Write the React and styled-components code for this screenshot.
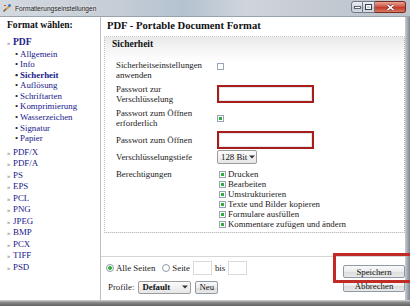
import React from "react";
import styled, { createGlobalStyle } from "styled-components";

const GlobalStyle = createGlobalStyle`
  html, body {
    margin: 0;
    padding: 0;
  }
  body {
    width: 410px;
    height: 306px;
    overflow: hidden;
    background: #fff;
    font-family: "Liberation Serif", "Times New Roman", serif;
  }
`;

const pdfPages = [
  "Allgemein",
  "Info",
  "Sicherheit",
  "Auflösung",
  "Schriftarten",
  "Komprimierung",
  "Wasserzeichen",
  "Signatur",
  "Papier",
];

const formats = ["PDF/X", "PDF/A", "PS", "EPS", "PCL", "PNG", "JPEG", "BMP", "PCX", "TIFF", "PSD"];

const permissions = [
  "Drucken",
  "Bearbeiten",
  "Umstrukturieren",
  "Texte und Bilder kopieren",
  "Formulare ausfüllen",
  "Kommentare zufügen und ändern",
];

const Window = styled.div`
  position: relative;
  width: 410px;
  height: 306px;
  display: flex;
  flex-direction: column;
  overflow: hidden;
  background: #fff;
`;

const TitleBar = styled.div`
  height: 17px;
  flex: none;
  display: flex;
  align-items: center;
  padding-left: 2px;
  background: linear-gradient(
    to right,
    #d3d9df 0%,
    #c4ccd5 30%,
    #b4c2d0 45%,
    #cfd5db 60%,
    #c3c9d0 80%,
    #bcc3cb 100%
  );
  border-bottom: 1px solid #9aa3ad;
  box-sizing: border-box;
`;

const TitleText = styled.span`
  margin-left: 3px;
  font-family: "Liberation Sans", Arial, sans-serif;
  font-size: 6.6px;
  color: #1b1b1b;
  text-shadow: 0 0 3px #fff;
`;

const Caption = styled.div`
  margin-left: auto;
  display: flex;
  align-self: flex-start;
  margin-top: 1px;
  margin-right: 4px;
`;

const CapButton = styled.div`
  width: ${(p) => (p.$wide ? 31 : 12)}px;
  height: 12px;
  display: flex;
  align-items: center;
  justify-content: center;
  border: 1px solid ${(p) => (p.$wide ? "#7b2a20" : "#6f7884")};
  border-left-width: ${(p) => (p.$first ? 1 : 0)}px;
  border-radius: ${(p) => (p.$first ? "3px 0 0 3px" : p.$wide ? "0 3px 3px 0" : "0")};
  background: ${(p) =>
    p.$wide
      ? "linear-gradient(#e8a595, #d0584a 45%, #c23b2b 55%, #d97a60)"
      : "linear-gradient(#eef1f4, #d4dae0 45%, #c2c9d1 55%, #d8dde3)"};
  box-sizing: border-box;
`;

const Main = styled.div`
  flex: 1;
  min-height: 0;
  display: flex;
`;

const Sidebar = styled.nav`
  width: 101px;
  flex: none;
  box-sizing: border-box;
  border-right: 1px solid #bdbdbd;
  padding: 2px 0 0 7px;
  color: #20208a;
`;

const SideHeading = styled.div`
  font-weight: bold;
  font-size: 9.6px;
  line-height: 12px;
  color: #111;
`;

const FormatItem = styled.div`
  display: flex;
  align-items: baseline;
  font-size: ${(p) => (p.$active ? 9.6 : 8.9)}px;
  font-weight: ${(p) => (p.$active ? "bold" : "normal")};
  line-height: 11.5px;
  margin-top: ${(p) => p.$top || 0}px;
`;

const Marker = styled.span`
  width: 6px;
  font-size: 6.5px;
  color: #666;
  font-weight: normal;
`;

const SubItem = styled.div`
  display: flex;
  padding-left: 8px;
  font-size: 8.9px;
  line-height: 10.6px;
  font-weight: ${(p) => (p.$active ? "bold" : "normal")};
`;

const Bullet = styled.span`
  width: 5px;
  color: #222;
`;

const Content = styled.section`
  flex: 1;
  min-width: 0;
  display: flex;
  flex-direction: column;
`;

const PageTitle = styled.h1`
  margin: 0;
  padding: 2px 0 0 6px;
  font-size: 10.6px;
  line-height: 13px;
  font-weight: bold;
  color: #111;
`;

const Fieldset = styled.div`
  margin: 4px 0 0 3px;
  border: 1px dotted #c2c2c2;
  border-right: 1px dotted #b0b0b0;
  background: linear-gradient(#e9e9e9, #f7f7f7 14px, #fff 26px);
  padding-bottom: 3px;
`;

const Legend = styled.div`
  height: 14px;
  padding-left: 7px;
  font-size: 9.5px;
  font-weight: bold;
  line-height: 14px;
  color: #111;
`;

const Form = styled.div`
  padding: 9px 0 0 11px;
  font-size: 8.8px;
  color: #222;
`;

const Row = styled.div`
  display: flex;
  align-items: ${(p) => (p.$top ? "flex-start" : "center")};
  margin-top: ${(p) => p.$gap || 0}px;
  min-height: ${(p) => p.$h || 0}px;
`;

const Label = styled.div`
  width: 101px;
  flex: none;
  line-height: 10px;
`;

const Check = styled.span`
  width: 7px;
  height: 7px;
  flex: none;
  box-sizing: border-box;
  border: 1px solid #98a6b8;
  background: #fff;
  display: flex;
  align-items: center;
  justify-content: center;
  align-self: ${(p) => (p.$top ? "flex-start" : "auto")};
  margin-top: ${(p) => (p.$top ? 3 : 0)}px;

  &::after {
    content: "";
    width: 3px;
    height: 3px;
    background: ${(p) => (p.$on ? "#2fae3e" : "transparent")};
  }
`;

const RedInput = styled.div`
  width: 97px;
  height: 18px;
  box-sizing: border-box;
  border: 2px solid #a61e1b;
  box-shadow: inset 0 0 0 1px #e6e6e6;
  background: #fff;
`;

const Select = styled.div`
  width: ${(p) => p.$w}px;
  height: ${(p) => p.$h || 14}px;
  box-sizing: border-box;
  display: flex;
  align-items: center;
  padding: 0 2px 0 3px;
  border: 1px solid #9c9c9c;
  border-radius: 2px;
  background: linear-gradient(#fbfbfb, #e6e6e6);
  font-size: 8.8px;
  font-weight: ${(p) => (p.$bold ? "bold" : "normal")};
  color: #111;
  white-space: nowrap;
  gap: 2px;

  svg {
    margin-left: auto;
    flex: none;
  }
`;

const PermList = styled.div`
  padding-left: 2px;
`;

const Perm = styled.div`
  display: flex;
  align-items: center;
  gap: 2px;
  line-height: 10px;
  height: 10px;
`;

const Spacer = styled.div`
  flex: 1;
`;

const Footer = styled.div`
  height: 44px;
  flex: none;
  display: flex;
  border-top: 1px solid #d6d6d6;
  box-sizing: border-box;
  font-size: 8.8px;
  color: #222;
`;

const FooterLeft = styled.div`
  padding: 4px 0 0 5px;
  display: flex;
  flex-direction: column;
  gap: 5px;
`;

const Line = styled.div`
  display: flex;
  align-items: center;
  height: 14px;
  gap: ${(p) => p.$gap || 3}px;
`;

const Radio = styled.span`
  width: 8px;
  height: 8px;
  flex: none;
  box-sizing: border-box;
  border-radius: 50%;
  border: 1px solid #8d99a8;
  background: radial-gradient(circle, ${(p) => (p.$on ? "#34b044 0 1.6px" : "#fff 0 1px")}, #fff 2.2px, #eef0f3);
  margin-left: ${(p) => p.$indent || 0}px;
  margin-right: -1px;
`;

const SmallBox = styled.span`
  width: 19px;
  height: 14px;
  box-sizing: border-box;
  border: 1px solid #dadada;
  background: #fff;
`;

const Button = styled.div`
  height: ${(p) => p.$h || 13}px;
  box-sizing: border-box;
  display: flex;
  align-items: center;
  justify-content: center;
  padding: 0 3px;
  border: 1px solid #8e9aa8;
  border-radius: 2px;
  background: linear-gradient(#fafafa, #ececec 50%, #dcdcdc 51%, #e9e9e9);
  font-size: 8.8px;
  color: #111;
`;

const FooterRight = styled.div`
  margin-left: auto;
  width: 62px;
  padding-top: 8px;
  display: flex;
  flex-direction: column;
  gap: 2px;
`;

const RightFrame = styled.div`
  width: 5px;
  flex: none;
  background: linear-gradient(to right, #c9ced3, #9aa1a8 60%, #7f868d);
`;

const BottomFrame = styled.div`
  height: 6px;
  flex: none;
  background: linear-gradient(#d6d6d6, #8a8a8a 40%, #5f5f5f);
`;

const Highlight = styled.div`
  position: absolute;
  left: 333px;
  top: 253px;
  width: 85px;
  height: 30px;
  box-sizing: border-box;
  border: 3px solid #c22b25;
  pointer-events: none;
`;

const Arrow = () => (
  <svg width="6" height="4" viewBox="0 0 6 4">
    <path d="M0 0.5h6L3 3.5z" fill="#333" />
  </svg>
);

const AppIcon = () => (
  <svg width="10" height="10" viewBox="0 0 10 10">
    <path d="M1 8l3-3 1 1-3 3z" fill="#7a5a2a" />
    <path d="M4 5l3-3 1.5 1.5-3 3z" fill="#e8a23a" />
    <circle cx="7.5" cy="2.5" r="1.5" fill="#3a7bd5" />
    <path d="M2 2h2v1H2z" fill="#d04a3a" />
  </svg>
);

export default function App() {
  return (
    <>
      <GlobalStyle />
      <Window>
        <TitleBar>
          <AppIcon />
          <TitleText>Formatierungseinstellungen</TitleText>
          <Caption>
            <CapButton $first>
              <svg width="7" height="3" viewBox="0 0 7 3">
                <rect x="0.5" y="0.5" width="6" height="2" fill="#fff" stroke="#3b4552" strokeWidth="0.8" />
              </svg>
            </CapButton>
            <CapButton>
              <svg width="7" height="6" viewBox="0 0 7 6">
                <rect x="0.5" y="0.5" width="6" height="5" fill="none" stroke="#3b4552" strokeWidth="1" />
                <rect x="1.5" y="1.5" width="4" height="3" fill="none" stroke="#fff" strokeWidth="0.8" />
              </svg>
            </CapButton>
            <CapButton $wide>
              <svg width="9" height="7" viewBox="0 0 9 7">
                <path d="M1.5 0.8L7.5 6.2M7.5 0.8L1.5 6.2" stroke="#5a1a12" strokeWidth="2.6" />
                <path d="M1.5 0.8L7.5 6.2M7.5 0.8L1.5 6.2" stroke="#fff" strokeWidth="1.6" />
              </svg>
            </CapButton>
          </Caption>
        </TitleBar>

        <Main>
          <Sidebar>
            <SideHeading>Format wählen:</SideHeading>
            <FormatItem $active $top={5}>
              <Marker>»</Marker>PDF
            </FormatItem>
            {pdfPages.map((p) => (
              <SubItem key={p} $active={p === "Sicherheit"}>
                <Bullet>•</Bullet>
                {p}
              </SubItem>
            ))}
            {formats.map((f, i) => (
              <FormatItem key={f} $top={i === 0 ? 3 : 0}>
                <Marker>»</Marker>
                {f}
              </FormatItem>
            ))}
          </Sidebar>

          <Content>
            <PageTitle>PDF - Portable Document Format</PageTitle>
            <Fieldset>
              <Legend>Sicherheit</Legend>
              <Form>
                <Row $h={20}>
                  <Label>
                    Sicherheitseinstellungen
                    <br />
                    anwenden
                  </Label>
                  <Check $top />
                </Row>
                <Row $gap={4} $h={20}>
                  <Label>
                    Passwort zur
                    <br />
                    Verschlüsselung
                  </Label>
                  <RedInput />
                </Row>
                <Row $gap={4} $h={20}>
                  <Label>
                    Passwort zum Öffnen
                    <br />
                    erforderlich
                  </Label>
                  <Check $on />
                </Row>
                <Row $gap={3}>
                  <Label>Passwort zum Öffnen</Label>
                  <RedInput />
                </Row>
                <Row $gap={1}>
                  <Label>Verschlüsselungstiefe</Label>
                  <Select $w={40}>
                    128 Bit
                    <Arrow />
                  </Select>
                </Row>
                <Row $gap={5} $top>
                  <Label>Berechtigungen</Label>
                  <PermList>
                    {permissions.map((p) => (
                      <Perm key={p}>
                        <Check $on />
                        {p}
                      </Perm>
                    ))}
                  </PermList>
                </Row>
              </Form>
            </Fieldset>
            <Spacer />
            <Footer>
              <FooterLeft>
                <Line>
                  <Radio $on />
                  Alle Seiten
                  <Radio $indent={4} />
                  Seite
                  <SmallBox />
                  bis
                  <SmallBox />
                </Line>
                <Line $gap={4}>
                  <span style={{ marginLeft: 2 }}>Profile:</span>
                  <Select $w={53} $h={13} $bold>
                    Default
                    <Arrow />
                  </Select>
                  <Button>Neu</Button>
                </Line>
              </FooterLeft>
              <FooterRight>
                <Button>Speichern</Button>
                <Button $h={12}>Abbrechen</Button>
              </FooterRight>
            </Footer>
          </Content>
          <RightFrame />
        </Main>
        <BottomFrame />
        <Highlight />
      </Window>
    </>
  );
}
